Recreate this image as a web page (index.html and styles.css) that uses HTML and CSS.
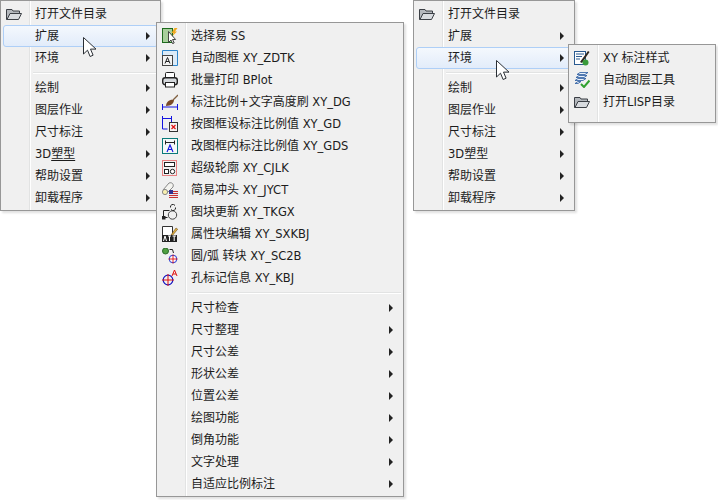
FILE: index.html
```html
<!DOCTYPE html>
<html lang="zh">
<head>
<meta charset="utf-8">
<title>菜单</title>
<link rel="stylesheet" href="styles.css">
</head>
<body>
<svg class="defs" width="0" height="0">
  <symbol id="folder" viewBox="0 0 16 16">
    <path d="M.500 3.500h5.500l1 1.500h6.500v2.500H4.500L1.500 13.500H.500z" fill="#b4b8bd" stroke="#3b3f45"/>
    <path d="M4 7.500h11.500l-3 6H1z" fill="#d8dbdf" stroke="#3b3f45"/>
  </symbol>
</svg>

<nav class="menu menu-a">
  <div class="row"><svg class="ico"><use href="#folder"/></svg><span class="lbl">打开文件目录</span></div>
  <div class="row active"><span class="lbl">扩展</span><i class="arr"></i></div>
  <div class="row"><span class="lbl">环境</span><i class="arr"></i></div>
  <div class="sep"></div>
  <div class="row"><span class="lbl">绘制</span><i class="arr"></i></div>
  <div class="row"><span class="lbl">图层作业</span><i class="arr"></i></div>
  <div class="row"><span class="lbl">尺寸标注</span><i class="arr"></i></div>
  <div class="row"><span class="lbl"><span class="en">3D</span><u>塑型</u></span><i class="arr"></i></div>
  <div class="row"><span class="lbl">帮助设置</span><i class="arr"></i></div>
  <div class="row"><span class="lbl">卸载程序</span><i class="arr"></i></div>
</nav>

<nav class="menu menu-b">
  <div class="row"><svg class="ico" viewBox="0 0 16 16"><rect x="0.500" y="0.500" width="10" height="14" fill="#a8cf9c" stroke="#1d6b1d"/><path d="M12.500 0l-3 5h2l-1 3 4.500-4.500h-2L15.500 0z" fill="#f0a820"/><path d="M6.500 3.500v11l2.500-2.500 1.600 3.700 1.600-.7-1.600-3.500h3z" fill="#fff" stroke="#333" stroke-width=".9"/></svg><span class="lbl">选择易<span class="en"> SS</span></span></div>
  <div class="row"><svg class="ico" viewBox="0 0 16 16"><path d="M.500 5V.500h15v15H10" fill="#dcebf8" stroke="#2f86cc"/><rect x="0.500" y="5.500" width="10" height="10" fill="#f4f4f4" stroke="#444"/><path d="M3 13.500l2.500-6 2.500 6M4 11.500h3" fill="none" stroke="#222"/></svg><span class="lbl">自动图框<span class="en"> XY_ZDTK</span></span></div>
  <div class="row"><svg class="ico" viewBox="0 0 16 16"><path d="M3.500 6V1.500q0-1 1-1h7q1 0 1 1V6" fill="#fff" stroke="#222"/><rect x="0.700" y="5.700" width="14.600" height="7" rx="2.500" fill="#d4d8dc" stroke="#222" stroke-width="1.400"/><rect x="3.500" y="10.500" width="9" height="4.500" fill="#fff" stroke="#222"/></svg><span class="lbl">批量打印<span class="en"> BPlot</span></span></div>
  <div class="row"><svg class="ico" viewBox="0 0 16 16"><path d="M.500 10v6M15.500 10v6M.500 13h15" stroke="#1414e0" fill="none"/><path d="M4 12c0-4 4-7 8-6 0 3-3 6-8 6z" fill="#7a4a28"/><path d="M11 6l5-5" stroke="#806040" stroke-width="1.300"/></svg><span class="lbl">标注比例<span class="en">+</span>文字高度刷<span class="en"> XY_DG</span></span></div>
  <div class="row"><svg class="ico" viewBox="0 0 16 16"><path d="M.500 0v6M9.500 0v6M.500 2.500h9M.500 6v7h5" stroke="#1414e0" fill="none"/><rect x="7.500" y="6.500" width="8" height="9" fill="#f4f4f4" stroke="#333"/><path d="M9.500 9l4 4M13.500 9l-4 4" stroke="#e01010" stroke-width="1.200"/></svg><span class="lbl">按图框设标注比例值<span class="en"> XY_GD</span></span></div>
  <div class="row"><svg class="ico" viewBox="0 0 16 16"><rect x="0.500" y="0.500" width="15" height="15" fill="#f4f8f8" stroke="#0a7a7a"/><path d="M3.500 2.500v4M12.500 2.500v4M3.500 4.500h9" stroke="#222" fill="none"/><path d="M5 14l3-7 3 7M6 11.500h4" stroke="#1414e0" fill="none" stroke-width="1.100"/></svg><span class="lbl">改图框内标注比例值<span class="en"> XY_GDS</span></span></div>
  <div class="row"><svg class="ico" viewBox="0 0 16 16"><rect x="0.500" y="0.500" width="14" height="15" fill="none" stroke="#e01010" stroke-dasharray="1 1"/><rect x="2.500" y="2.500" width="10" height="4" fill="#fff" stroke="#222"/><rect x="2.500" y="9.500" width="4" height="4" fill="#fff" stroke="#222"/><circle cx="10.500" cy="11.500" r="2.200" fill="#fff" stroke="#222"/></svg><span class="lbl">超级轮廓<span class="en"> XY_CJLK</span></span></div>
  <div class="row"><svg class="ico" viewBox="0 0 16 16"><path d="M1 8l6-7c3-1 5 1 4 4l-6 6" fill="#f4f4f0" stroke="#888"/><circle cx="3" cy="10" r="2.600" fill="#f8f0b0" stroke="#888"/><rect x="7" y="8" width="9" height="8" fill="#e8e8f0"/><path d="M7 9.500h9M7 11.500h9M7 13.500h9M7 15.500h9" stroke="#c83030"/><rect x="7" y="8" width="4" height="4" fill="#303090"/></svg><span class="lbl">简易冲头<span class="en"> XY_JYCT</span></span></div>
  <div class="row"><svg class="ico" viewBox="0 0 16 16"><path d="M1.500 6.500h6M1.500 6.500v7h4" fill="none" stroke="#222"/><rect x="0" y="12" width="3.500" height="3.500" fill="#222"/><circle cx="10.500" cy="11" r="4.200" fill="#f0f0f0" stroke="#444"/><path d="M8.500 3.500a2.500 2.500 0 0 1 4.500-2M13.500 3.500a2.500 2.500 0 0 1-4.500 2" fill="none" stroke="#222"/></svg><span class="lbl">图块更新<span class="en"> XY_TKGX</span></span></div>
  <div class="row"><svg class="ico" viewBox="0 0 16 16"><path d="M.500 9V.500h10v8" fill="#fff" stroke="#333"/><path d="M9 9l5-7 1.700 1.200-5 6z" fill="#e0b040" stroke="#705020" stroke-width=".6"/><rect x="0" y="9" width="15" height="7" fill="#222"/><path d="M1.500 15l1.500-5 1.500 5M6 10h3M7.500 10v5M10.500 10h3.500M12.200 10v5" fill="none" stroke="#fff"/></svg><span class="lbl">属性块编辑<span class="en"> XY_SXKBJ</span></span></div>
  <div class="row"><svg class="ico" viewBox="0 0 16 16"><circle cx="3.500" cy="3" r="3" fill="#50a040" stroke="#2a6a2a"/><path d="M7.500 1.500h3l1 3.500" fill="none" stroke="#222"/><circle cx="11" cy="11" r="3.800" fill="#fff" stroke="#2030d0"/><path d="M6.500 11h9M11 6.500v9" stroke="#e01010" stroke-width=".9"/></svg><span class="lbl">圆<span class="en">/</span>弧<span class="en"> </span>转块<span class="en"> XY_SC2B</span></span></div>
  <div class="row"><svg class="ico" viewBox="0 0 16 16"><circle cx="6" cy="10" r="4.800" fill="none" stroke="#1414c0" stroke-width="1.200"/><path d="M0 10h12M6 4v12" stroke="#e01010"/><path d="M10 6l2.500-6 2.500 6M11 4h3" fill="none" stroke="#e01010"/></svg><span class="lbl">孔标记信息<span class="en"> XY_KBJ</span></span></div>
  <div class="sep"></div>
  <div class="row"><span class="lbl">尺寸检查</span><i class="arr"></i></div>
  <div class="row"><span class="lbl">尺寸整理</span><i class="arr"></i></div>
  <div class="row"><span class="lbl">尺寸公差</span><i class="arr"></i></div>
  <div class="row"><span class="lbl">形状公差</span><i class="arr"></i></div>
  <div class="row"><span class="lbl">位置公差</span><i class="arr"></i></div>
  <div class="row"><span class="lbl">绘图功能</span><i class="arr"></i></div>
  <div class="row"><span class="lbl">倒角功能</span><i class="arr"></i></div>
  <div class="row"><span class="lbl">文字处理</span><i class="arr"></i></div>
  <div class="row"><span class="lbl">自适应比例标注</span><i class="arr"></i></div>
</nav>

<nav class="menu menu-c">
  <div class="row"><svg class="ico"><use href="#folder"/></svg><span class="lbl">打开文件目录</span></div>
  <div class="row"><span class="lbl">扩展</span><i class="arr"></i></div>
  <div class="row active"><span class="lbl">环境</span><i class="arr"></i></div>
  <div class="sep"></div>
  <div class="row"><span class="lbl">绘制</span><i class="arr"></i></div>
  <div class="row"><span class="lbl">图层作业</span><i class="arr"></i></div>
  <div class="row"><span class="lbl">尺寸标注</span><i class="arr"></i></div>
  <div class="row"><span class="lbl"><span class="en">3D</span>塑型</span><i class="arr"></i></div>
  <div class="row"><span class="lbl">帮助设置</span><i class="arr"></i></div>
  <div class="row"><span class="lbl">卸载程序</span><i class="arr"></i></div>
</nav>

<nav class="menu menu-d">
  <div class="row"><svg class="ico" viewBox="0 0 16 16"><rect x="0.500" y="1.500" width="11" height="13" fill="#fff" stroke="#2a5a90"/><path d="M2 4h8M2 6.500h6M2 9h4" stroke="#2a5a90"/><path d="M6 12l8-11 1.500 1-7.500 11z" fill="#302820"/><circle cx="11.500" cy="12.500" r="3" fill="#3a9a3a"/></svg><span class="lbl"><span class="en">XY </span>标注样式</span></div>
  <div class="row"><svg class="ico" viewBox="0 0 16 16"><path d="M3 2.500l3-2h8l-3 2zM2 5.500l3-2h8l-3 2zM1 8.500l3-2h8l-3 2zM1 11.500l3-2h3l-3 2z" fill="#e8f0fa" stroke="#2a5aa0" stroke-width=".8"/><path d="M7 12l3 3 5.500-6.500" fill="none" stroke="#30a030" stroke-width="2"/></svg><span class="lbl">自动图层工具</span></div>
  <div class="row"><svg class="ico"><use href="#folder"/></svg><span class="lbl">打开<span class="en">LISP</span>目录</span></div>
</nav>

<svg class="cursor cursor-a" viewBox="0 0 14 22"><path d="M.500 .500v16.500l4-3.800 2.600 6.300 3-1.300-2.600-6.100h5.500z" fill="#fff" stroke="#2a2f35"/></svg>
<svg class="cursor cursor-c" viewBox="0 0 14 22"><path d="M.500 .500v16.500l4-3.800 2.600 6.300 3-1.300-2.600-6.100h5.500z" fill="#fff" stroke="#2a2f35"/></svg>
</body>
</html>
```
FILE: styles.css
```css
html, body {
  margin: 0;
  padding: 0;
  background: #fff;
  width: 718px;
  height: 500px;
  overflow: hidden;
}
body {
  position: relative;
  font: 12px/22px "Noto Sans", "Noto Sans CJK SC", sans-serif;
  color: #1c1c1c;
}
.defs { position: absolute; }
.menu {
  position: absolute;
  box-sizing: border-box;
  padding: 2px;
  border: 1px solid #979797;
  background: #f0f0f0 linear-gradient(to right, transparent 28px, #e2e3e3 28px, #e2e3e3 29px, #fff 29px, #fff 30px, transparent 30px);
  box-shadow: 2px 2px 2px rgba(0, 0, 0, .12);
}
.menu-a { left: 0; top: 0; width: 161px; height: 211px; }
.menu-b { left: 156px; top: 22px; width: 248px; height: 475px; }
.menu-c { left: 413px; top: 0; width: 162px; height: 211px; }
.menu-d { left: 568px; top: 44px; width: 148px; height: 79px; }
.row {
  position: relative;
  display: flex;
  align-items: center;
  box-sizing: border-box;
  height: 22px;
  padding: 0 8px 0 3px;
  white-space: nowrap;
}
.row.active {
  border: 1px solid #aecff7;
  border-radius: 3px;
  background: linear-gradient(to bottom, #f4f8fd, #e2ecfa);
  padding: 0 7px 0 2px;
}
.ico {
  position: absolute;
  left: 3px;
  top: 3px;
  width: 16px;
  height: 16px;
}
.row.active .ico { left: 2px; top: 2px; }
.lbl {
  margin-left: 29px;
  flex: 1;
  font-size: 12px;
  white-space: pre;
}
.en {
  font-family: "DejaVu Sans", sans-serif;
  font-size: 11.5px;
}
.lbl u { text-underline-offset: 2px; }
.arr {
  width: 0;
  height: 0;
  border-left: 4px solid #222;
  border-top: 4px solid transparent;
  border-bottom: 4px solid transparent;
}
.sep {
  height: 8px;
  margin-left: 30px;
  background: linear-gradient(#e2e3e3, #e2e3e3) 0 3px / 100% 1px no-repeat,
              linear-gradient(#fff, #fff) 0 4px / 100% 1px no-repeat;
}
.cursor {
  position: absolute;
  width: 14px;
  height: 22px;
}
.cursor-a { left: 83px; top: 37px; }
.cursor-c { left: 496px; top: 60px; }
```
